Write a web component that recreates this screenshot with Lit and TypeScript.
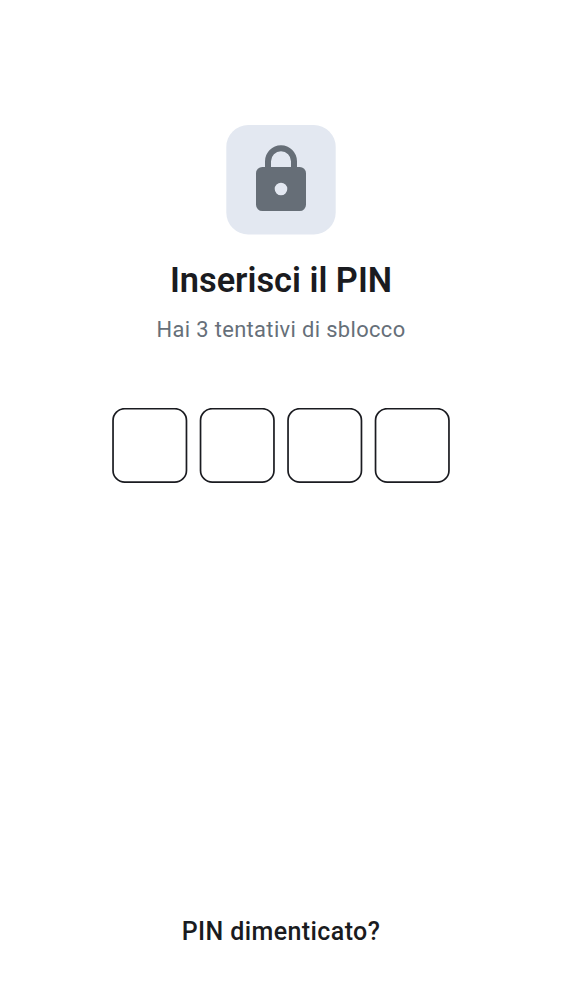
import { LitElement, html, svg, css } from "lit";
import { customElement, property } from "lit/decorators.js";

@customElement("pin-cells")
class PinCells extends LitElement {
  @property({ type: Number }) length = 4;

  static styles = css`
    :host {
      display: block;
    }
    svg {
      display: block;
    }
    rect {
      fill: none;
      stroke: #1a1b20;
      stroke-width: 1.7px;
    }
  `;

  render() {
    const width = Math.ceil(this.length * 87.5 - 12.5);
    return html`
      <svg width=${width} height="76" role="group" aria-label="PIN">
        ${Array.from(
          { length: this.length },
          (_, i) => svg`<rect x=${1.03 + i * 87.5} y="0.7" width="73.44" height="73.44" rx="11.72" />`
        )}
      </svg>
    `;
  }
}

@customElement("app-root")
class AppRoot extends LitElement {
  @property({ type: Number }) attempts = 3;

  static styles = css`
    :host {
      display: flex;
      flex-direction: column;
      align-items: center;
      box-sizing: border-box;
      height: 1000px;
      padding: 125px 0 50px;
      background: #fff;
      color: #1a1b20;
      font-family: Roboto, sans-serif;
    }
    .badge {
      display: block;
      width: 110px;
      height: 110px;
    }
    h1 {
      margin: 25px 0 0;
      font-size: 34.375px;
      line-height: 40px;
      font-weight: 600;
      white-space: nowrap;
    }
    p {
      margin: 16px 0 0;
      font-size: 21.875px;
      line-height: 28px;
      letter-spacing: 0.37px;
      color: #666f79;
      white-space: nowrap;
    }
    pin-cells {
      margin-top: 64px;
    }
    .forgot {
      margin-top: auto;
      padding: 0;
      border: 0;
      background: none;
      color: inherit;
      font: 500 25px/36px Roboto, sans-serif;
      letter-spacing: 0.4px;
      white-space: nowrap;
    }
  `;

  render() {
    return html`
      <svg class="badge" viewBox="0 0 110 110" aria-hidden="true">
        <rect x="0.3" width="109.4" height="109.4" rx="21.9" fill="#e3e8f1" />
        <path fill="#666e77" fill-rule="evenodd" d="M36.300 42H39V36.200a16 16 0 0 1 32 0v5.800h2.700a6.300 6.300 0 0 1 6.300 6.300v31.400a6.300 6.300 0 0 1-6.300 6.300H36.300a6.300 6.300 0 0 1-6.300-6.300V48.300a6.300 6.300 0 0 1 6.300-6.300zM45 42h20v-5.800a10 10 0 0 0-20 0zM55 57.700a6.300 6.300 0 1 0 0 12.600a6.300 6.300 0 0 0 0-12.600z" />
      </svg>
      <h1>Inserisci il PIN</h1>
      <p>Hai ${this.attempts} tentativi di sblocco</p>
      <pin-cells></pin-cells>
      <button class="forgot">PIN dimenticato?</button>
    `;
  }
}
